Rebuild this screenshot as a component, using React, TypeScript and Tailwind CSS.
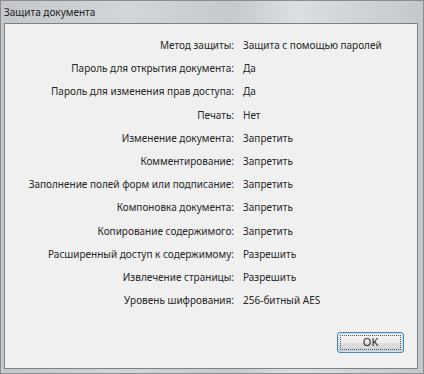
import React from "react"

const rows: [string, string][] = [
  ["Метод защиты:", "Защита с помощью паролей"],
  ["Пароль для открытия документа:", "Да"],
  ["Пароль для изменения прав доступа:", "Да"],
  ["Печать:", "Нет"],
  ["Изменение документа:", "Запретить"],
  ["Комментирование:", "Запретить"],
  ["Заполнение полей форм или подписание:", "Запретить"],
  ["Компоновка документа:", "Запретить"],
  ["Копирование содержимого:", "Запретить"],
  ["Расширенный доступ к содержимому:", "Разрешить"],
  ["Извлечение страницы:", "Разрешить"],
  ["Уровень шифрования:", "256-битный AES"],
]

export default function App() {
  return (
    <div
      className="w-[424px] h-[374px] flex flex-col bg-[linear-gradient(90deg,#c3c7cb_0%,#d3d6d9_30%,#c6cacd_55%,#dcdfe1_70%,#c4c8cc_100%)] border border-[#8a8e92] text-[#262626]"
      style={{ fontFamily: '"Noto Sans", "Open Sans", sans-serif' }}
    >
      {/* Title bar */}
      <div className="h-[22px] flex items-center pl-[3px] text-[10px] text-[#222]">
        Защита документа
      </div>

      {/* Client area */}
      <div className="flex-1 ml-[3px] mb-[4px] mr-[5px] bg-[#f0f0f0] border border-[#7d8084] flex flex-col">
        <div className="grid grid-cols-[229px_1fr] gap-x-[9px] pt-[10px] text-[10px]">
          {rows.map(([label, value]) => (
            <React.Fragment key={label}>
              <div className="h-[23.2px] flex items-center justify-end whitespace-nowrap">{label}</div>
              <div className="h-[23.2px] flex items-center whitespace-nowrap">{value}</div>
            </React.Fragment>
          ))}
        </div>

        <div className="flex-1" />

        <div className="flex justify-end pr-[13px] pb-[15px]">
          <button className="w-[67px] h-[21px] rounded-[3px] border border-[#4a86b4] bg-[linear-gradient(180deg,#f4f4f4_0%,#ececec_50%,#dedede_51%,#d2d2d2_100%)] p-[2px] shadow-[inset_0_0_0_1px_#bfe0f5]">
            <div className="w-full h-full border border-dotted border-[#555] flex items-center justify-center text-[11px] text-[#1e1e1e]">
              OK
            </div>
          </button>
        </div>
      </div>
    </div>
  )
}
